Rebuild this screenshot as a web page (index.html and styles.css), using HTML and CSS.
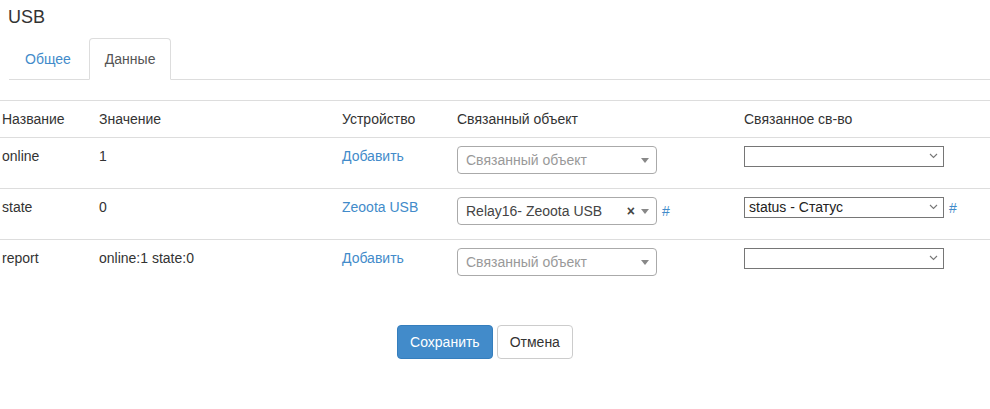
FILE: index.html
```html
<!DOCTYPE html>
<html lang="ru">
<head>
<meta charset="utf-8">
<title>USB</title>
<link rel="stylesheet" href="styles.css">
</head>
<body>
<div class="page">
  <h1 class="title">USB</h1>
  <ul class="tabs">
    <li class="tab"><a href="#">Общее</a></li>
    <li class="tab active"><a href="#">Данные</a></li>
  </ul>

  <table class="data">
    <thead>
      <tr>
        <th class="c-name">Название</th>
        <th class="c-val">Значение</th>
        <th class="c-dev">Устройство</th>
        <th class="c-obj">Связанный объект</th>
        <th class="c-prop">Связанное св-во</th>
      </tr>
    </thead>
    <tbody>
      <tr>
        <td class="c-name"><div class="cell">online</div></td>
        <td class="c-val">1</td>
        <td class="c-dev"><a href="#">Добавить</a></td>
        <td class="c-obj">
          <div class="s2 empty"><span class="s2-text">Связанный объект</span><span class="s2-arrow"><b></b></span></div>
        </td>
        <td class="c-prop">
          <div class="inline"><div class="nsel"><select class="native"><option></option></select><svg class="chev" width="9" height="6" viewBox="0 0 9 6"><path d="M1 1 L4.5 4.5 L8 1" fill="none" stroke="#777" stroke-width="1.1"/></svg></div></div>
        </td>
      </tr>
      <tr>
        <td class="c-name"><div class="cell">state</div></td>
        <td class="c-val">0</td>
        <td class="c-dev"><a href="#">Zeoota USB</a></td>
        <td class="c-obj">
          <div class="inline"><div class="s2"><span class="s2-text">Relay16- Zeoota USB</span><span class="s2-clear">×</span><span class="s2-arrow"><b></b></span></div><a href="#" class="hash">#</a></div>
        </td>
        <td class="c-prop">
          <div class="inline"><div class="nsel"><select class="native"><option>status - Статус</option></select><svg class="chev" width="9" height="6" viewBox="0 0 9 6"><path d="M1 1 L4.5 4.5 L8 1" fill="none" stroke="#777" stroke-width="1.1"/></svg></div><a href="#" class="hash">#</a></div>
        </td>
      </tr>
      <tr>
        <td class="c-name"><div class="cell">report</div></td>
        <td class="c-val">online:1 state:0</td>
        <td class="c-dev"><a href="#">Добавить</a></td>
        <td class="c-obj">
          <div class="s2 empty"><span class="s2-text">Связанный объект</span><span class="s2-arrow"><b></b></span></div>
        </td>
        <td class="c-prop">
          <div class="inline"><div class="nsel"><select class="native"><option></option></select><svg class="chev" width="9" height="6" viewBox="0 0 9 6"><path d="M1 1 L4.5 4.5 L8 1" fill="none" stroke="#777" stroke-width="1.1"/></svg></div></div>
        </td>
      </tr>
    </tbody>
  </table>

  <div class="actions">
    <button class="btn btn-primary" type="button">Сохранить</button>
    <button class="btn btn-default" type="button">Отмена</button>
  </div>
</div>
</body>
</html>
```

FILE: styles.css
```css
* { box-sizing: border-box; }

html, body {
  margin: 0;
  padding: 0;
  background: #fff;
}

body {
  font-family: "Liberation Sans", Arial, sans-serif;
  font-size: 14px;
  line-height: 20px;
  color: #333;
}

a {
  color: #428bca;
  text-decoration: none;
}

.title {
  margin: 7px 0 11px;
  padding-left: 8px;
  font-size: 18px;
  line-height: 20px;
  font-weight: normal;
  color: #333;
}

.tabs {
  list-style: none;
  margin: 0 0 20px 9px;
  padding: 0;
  display: flex;
  border-bottom: 1px solid #ddd;
}

.tab {
  margin-bottom: -1px;
  margin-right: 2px;
}

.tab a {
  display: block;
  padding: 10px 15px;
  line-height: 20px;
  border: 1px solid transparent;
  border-radius: 4px 4px 0 0;
}

.tab.active a {
  color: #555;
  background: #fff;
  border-color: #ddd #ddd transparent;
}

.data {
  width: 990px;
  border-collapse: separate;
  border-spacing: 0;
  margin-bottom: 20px;
}

.data th,
.data td {
  padding: 8px;
  text-align: left;
  vertical-align: top;
  border-top: 1px solid #ddd;
  font-weight: normal;
}

.data th { vertical-align: bottom; }

.data .c-name { width: 91px; padding-left: 2px; }
.data .c-val { width: 243px; }
.data .c-dev { width: 115px; }
.data .c-obj { width: 287px; }

.cell { min-height: 34px; }

.inline {
  display: flex;
  align-items: center;
  gap: 5px;
}

.s2 {
  width: 200px;
  height: 28px;
  border: 1px solid #aaa;
  border-radius: 4px;
  display: flex;
  align-items: center;
  padding-left: 8px;
  padding-right: 1px;
  color: #444;
  background: #fff;
}

.s2-text {
  flex: 1;
  white-space: nowrap;
  overflow: hidden;
}

.s2.empty .s2-text { color: #999; }

.s2-clear {
  font-weight: bold;
  font-size: 14px;
  color: #444;
}

.s2-arrow {
  width: 20px;
  height: 26px;
  display: flex;
  align-items: center;
  justify-content: center;
}

.s2-arrow b {
  display: block;
  width: 0;
  height: 0;
  border-style: solid;
  border-width: 5px 4px 0 4px;
  border-color: #888 transparent transparent transparent;
}

.nsel {
  position: relative;
  width: 200px;
  height: 21px;
}

.native {
  -webkit-appearance: none;
  appearance: none;
  width: 200px;
  height: 21px;
  margin: 0;
  padding: 0 20px 0 4px;
  border: 1px solid #767676;
  border-radius: 0;
  background: #fff;
  font-family: "Liberation Sans", Arial, sans-serif;
  font-size: 14px;
  line-height: 19px;
  color: #222;
}

.chev {
  position: absolute;
  right: 6px;
  top: 7px;
}

.hash { line-height: 20px; }

.actions {
  display: flex;
  justify-content: center;
  gap: 4px;
  width: 970px;
  padding-top: 15px;
}

.btn {
  font-family: "Liberation Sans", Arial, sans-serif;
  font-size: 14px;
  line-height: 20px;
  padding: 6px 12px;
  border: 1px solid transparent;
  border-radius: 4px;
  height: 34px;
  margin: 0;
}

.btn-primary {
  background: #428bca;
  border-color: #357ebd;
  color: #fff;
}

.btn-default {
  background: #fff;
  border-color: #ccc;
  color: #333;
}
```
